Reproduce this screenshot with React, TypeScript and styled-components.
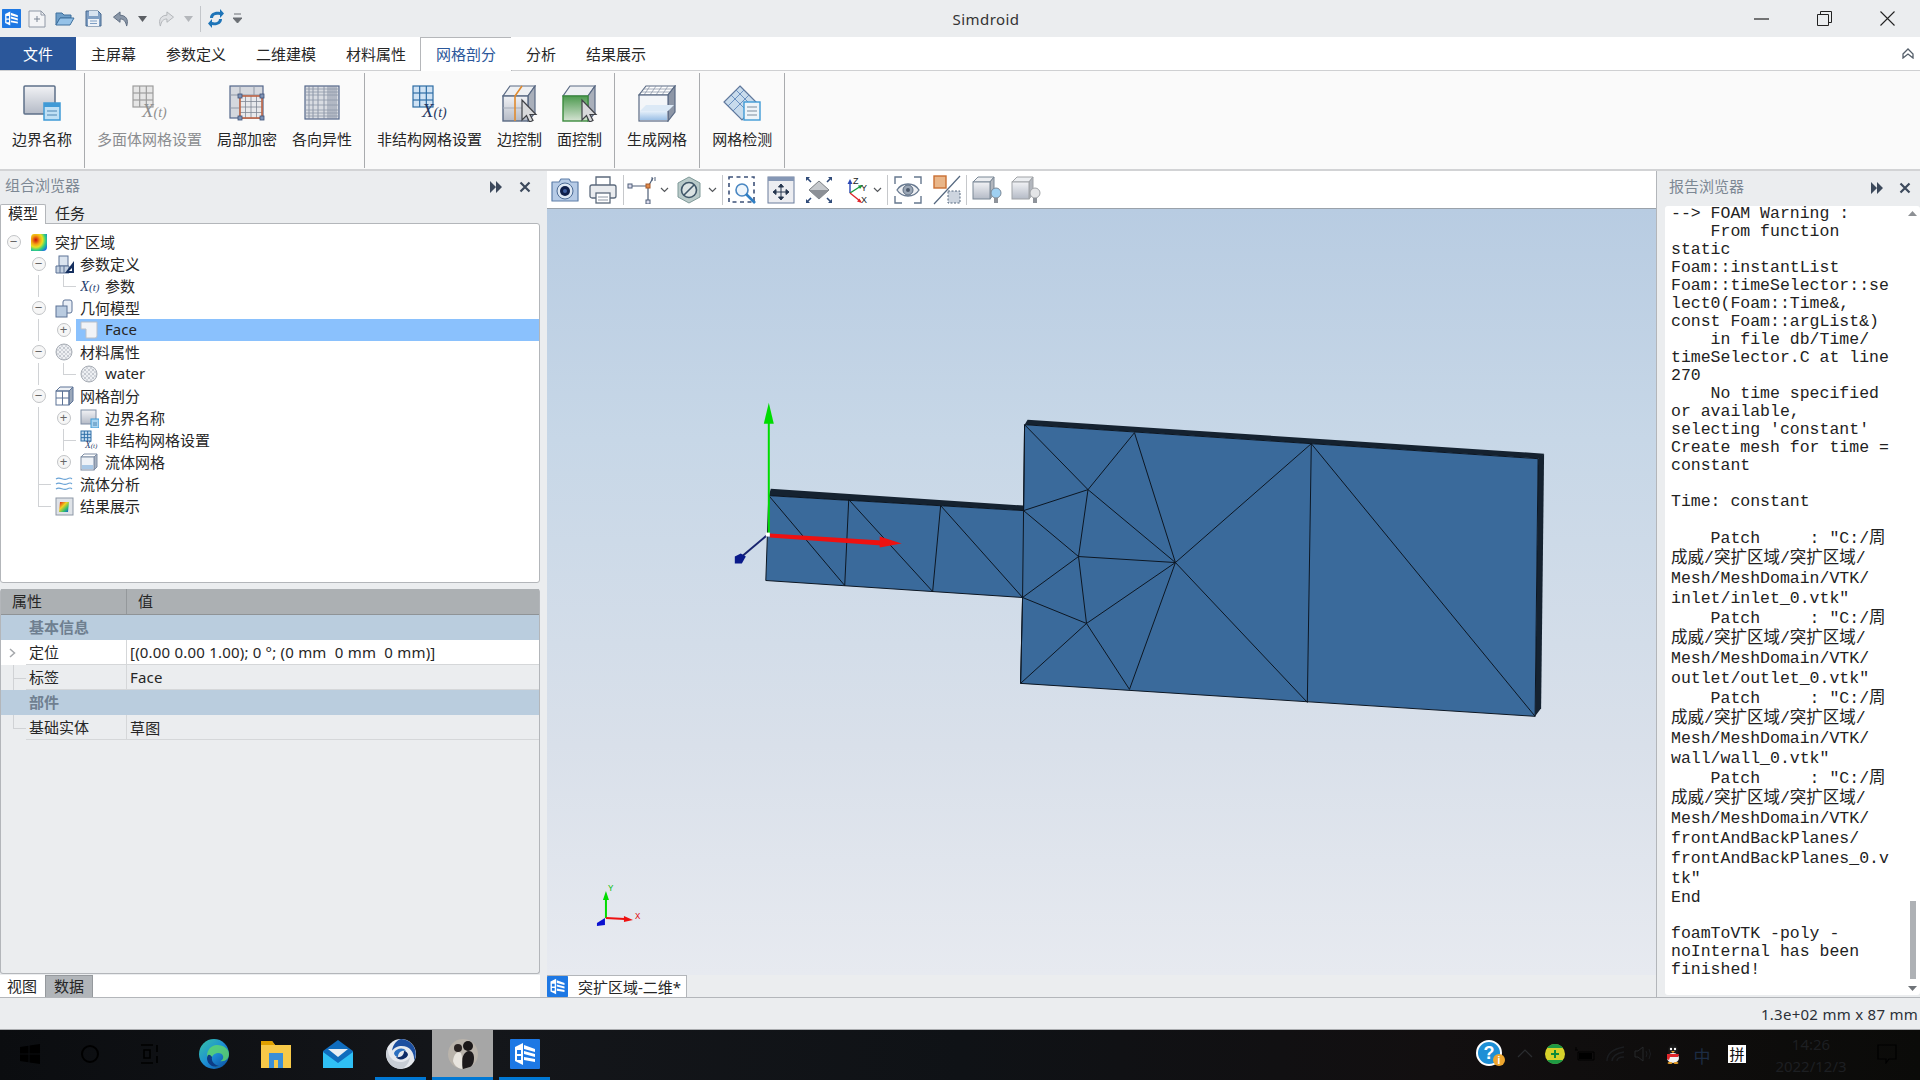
import React from 'react';
import styled, { createGlobalStyle } from 'styled-components';

const Global = createGlobalStyle`
  html, body { margin: 0; padding: 0; background: #ebedef; }
  body { font-family: "Noto Sans", "Noto Sans CJK SC", sans-serif; font-size: 15px; color: #262626; overflow: hidden; }
  * { box-sizing: border-box; }
  svg { display: block; flex: none; }
`;

const Page = styled.div`width: 1920px; height: 1080px; display: flex; flex-direction: column; overflow: hidden;`;

/* ---------- title bar ---------- */
const TitleBar = styled.div`height: 37px; display: flex; align-items: center; background: #ebedef;`;
const QuickBar = styled.div`width: 248px; display: flex; align-items: center; height: 100%;`;
const Slot = styled.div<{ $w: number }>`width: ${p => p.$w}px; height: 100%; display: flex; align-items: center; justify-content: center; flex: none;`;
const QuickSep = styled.div`width: 1px; height: 26px; background: #c3c6ca;`;
const AppTitle = styled.div`flex: 1; text-align: center; padding-right: 6px; font-size: 15px; letter-spacing: 0.45px; color: #333;`;
const WinControls = styled.div`display: flex; height: 100%; width: 190px; flex: none;`;

/* ---------- ribbon tabs ---------- */
const TabRow = styled.div`height: 33px; display: flex; align-items: stretch; background: #fff;`;
const FileTab = styled.div`width: 76px; background: #2b579a; color: #fff; display: flex; align-items: center; justify-content: center;`;
const RibbonTab = styled.div<{ $active?: boolean }>`
  padding: 0 15px ${p => (p.$active ? 2 : 0)}px; display: flex; align-items: center; height: ${p => (p.$active ? 34 : 33)}px;
  background: #fff; position: relative; z-index: 1;
  color: ${p => (p.$active ? '#2b579a' : '#262626')};
  border-style: solid; border-color: ${p => (p.$active ? '#b5b7ba' : 'transparent')};
  border-width: ${p => (p.$active ? '1px 1px 0 1px' : '0')};
  margin: ${p => (p.$active ? '0 -1px' : '0')};
`;
const Collapse = styled.div`margin-left: auto; padding-right: 6px; display: flex; align-items: center;`;

/* ---------- ribbon ---------- */
const Ribbon = styled.div`height: 101px; display: flex; background: #fafafa; border-top: 1px solid #cfd0d2; border-bottom: 2px solid #d2d3d5;`;
const RibbonGroup = styled.div`display: flex; gap: 15px; padding: 10px 12px 0; margin: 2px 0 1px; border-right: 1px solid #a9abae;`;
const RibbonBtn = styled.div<{ $off?: boolean }>`display: flex; flex-direction: column; align-items: center; color: ${p => (p.$off ? '#8b8d90' : '#262626')};`;
const RibbonIcon = styled.div`height: 40px; display: flex; align-items: center; justify-content: center;`;
const RibbonLabel = styled.div`margin-top: 6px; line-height: 20px; white-space: nowrap;`;

/* ---------- main ---------- */
const Main = styled.div`flex: 1; display: flex; min-height: 0;`;
const LeftPanel = styled.div`width: 547px; flex: none; display: flex; flex-direction: column;`;
const PanelHeader = styled.div<{ $h: number }>`height: ${p => p.$h}px; flex: none; display: flex; align-items: center; color: #7d8894; font-size: 15px;`;
const PanelTitle = styled.div`flex: 1; padding-left: 5px; padding-bottom: 7px;`;
const HeaderBtns = styled.div`display: flex; align-items: center; gap: 16px; padding-right: 16px; padding-bottom: 2px;`;

const TreeTabs = styled.div`height: 19px; display: flex; flex: none; position: relative; z-index: 1;`;
const TreeTab = styled.div<{ $active?: boolean }>`
  height: ${p => (p.$active ? 20 : 19)}px; padding: 0 7px; line-height: 17px; background: ${p => (p.$active ? '#fff' : 'transparent')};
  border: 1px solid ${p => (p.$active ? '#b3b6ba' : 'transparent')}; border-bottom: 0; border-radius: 2px 2px 0 0; margin-right: 1px;
`;
const TreeBox = styled.div`height: 360px; flex: none; width: 540px; background: #fff; border: 1px solid #b3b6ba; border-radius: 0 3px 3px 3px; padding-top: 7px;`;
const TreeRow = styled.div`height: 22px; display: flex; align-items: stretch;`;
const Guide = styled.div<{ $kind: string }>`
  width: 25px; flex: none; position: relative;
  &::before { content: ''; position: absolute; left: 12px; top: 0; width: 1px; background: #d0d2d5;
    height: ${p => (p.$kind === 'v' || p.$kind === 'tee' ? '100%' : p.$kind === 'elbow' ? '50%' : '0')}; }
  &::after { content: ''; position: absolute; left: 12px; top: 50%; height: 1px; background: #d0d2d5;
    width: ${p => (p.$kind === 'tee' || p.$kind === 'elbow' ? '13px' : '0')}; }
`;
const Toggle = styled.div`
  width: 25px; flex: none; display: flex; align-items: center; justify-content: center;
`;
const ToggleDot = styled.div`
  width: 14px; height: 14px; border: 1px solid #c2c4c7; border-radius: 50%; background: #f6f6f6; display: flex; align-items: center; justify-content: center;
  color: #666; font: 400 13px/12px "Liberation Sans", sans-serif;
`;
const RowBody = styled.div<{ $selected?: boolean }>`
  flex: 1; display: flex; align-items: center; gap: 7px; padding-left: 4px; background: ${p => (p.$selected ? '#8ac1fd' : 'transparent')};
  white-space: nowrap;
`;
const RowIcon = styled.div`width: 18px; flex: none; display: flex; align-items: center;`;
const RowText = styled.span`margin-bottom: 2px;`;
const Gap = styled.div`height: 6px; flex: none;`;

const PropBox = styled.div`flex: 1; width: 540px; background: #ebedef; border: 1px solid #b3b6ba; border-top: 0; border-radius: 3px; min-height: 0;`;
const PropHead = styled.div`height: 26px; background: #acb0b3; display: grid; grid-template-columns: 125px 1fr; border-bottom: 1px solid #8f9396; align-items: center;`;
const PropHeadCell = styled.div<{ $line?: boolean }>`padding-left: 11px; padding-bottom: 2px; height: 100%; display: flex; align-items: center; ${p => p.$line && 'border-left: 1px solid #94989b;'}`;
const PropSection = styled.div`height: 25px; background: #bacdde; color: #6f7f90; padding: 0 0 2px 28px; display: flex; align-items: center; font-weight: 600;`;
const PropRow = styled.div`height: 25px; display: grid; grid-template-columns: 25px 100px 1fr;`;
const PropGutter = styled.div<{ $kind: string }>`
  position: relative; display: flex; align-items: center; padding-left: 8px; background: ${p => (p.$kind === 'arrow' ? '#fff' : 'transparent')};
  &::before { content: ''; position: absolute; left: 12px; top: 0; width: 1px; height: ${p => (p.$kind === 'tee' ? '100%' : p.$kind === 'elbow' ? '50%' : '0')}; background: #d0d2d5; }
  &::after { content: ''; position: absolute; left: 12px; top: 50%; height: 1px; width: ${p => (p.$kind === 'arrow' ? '0' : '13px')}; background: #d0d2d5; }
`;
const PropName = styled.div<{ $white?: boolean }>`padding: 0 0 2px 3px; display: flex; align-items: center; background: ${p => (p.$white ? '#fff' : 'transparent')}; border-bottom: 1px solid #d5d7d9;`;
const PropValue = styled.div<{ $white?: boolean }>`padding-left: 3px; letter-spacing: 0.2px; display: flex; align-items: center; white-space: pre; border-left: 1px solid #d5d7d9; background: ${p => (p.$white ? '#fff' : 'transparent')}; border-bottom: 1px solid #d5d7d9;`;

const BottomTabs = styled.div`height: 22px; flex: none; width: 540px; margin-top: 1px; background: #fff; display: flex; align-items: flex-end;`;
const BottomTab = styled.div<{ $active?: boolean }>`
  height: ${p => (p.$active ? 22 : 21)}px; line-height: 21px; padding: 0 8px 0 ${p => (p.$active ? 8 : 7)}px;
  background: ${p => (p.$active ? '#b1b5b9' : 'transparent')}; border: ${p => (p.$active ? '1px solid #95999d' : '0')}; border-bottom: 0;
`;

const Center = styled.div`width: 1110px; flex: none; display: flex; flex-direction: column; border-right: 1px solid #b3b6ba;`;
const ViewToolbar = styled.div`height: 37px; flex: none; background: #fff; display: flex; align-items: center;`;
const ToolSep = styled.div`width: 1px; height: 30px; background: #c6c8cb; flex: none;`;
const ToolChev = styled.div<{ $w?: number }>`width: ${p => p.$w ?? 14}px; flex: none; display: flex; align-items: center;`;
const Viewport = styled.div`flex: 1; min-height: 0; border-top: 1px solid #9aa2aa; background: linear-gradient(180deg, #b8cce2 0%, #c7d7e7 30%, #d9e0ea 70%, #e7eaf0 100%);`;
const DocStrip = styled.div`height: 22px; flex: none; display: flex; background: #ebedef;`;
const DocTab = styled.div`width: 140px; display: flex; align-items: center; gap: 10px; background: #fff; border-top: 1px solid #b3b6ba; border-right: 1px solid #b3b6ba; white-space: nowrap;`;

const RightPanel = styled.div`flex: 1; display: flex; flex-direction: column; padding-left: 8px; min-width: 0;`;
const RightHeaderBtns = styled(HeaderBtns)`padding-right: 9px; gap: 15px;`;
const RightTitle = styled(PanelTitle)`padding-left: 4px;`;
const ReportBox = styled.div`flex: 1; margin-bottom: 2px; background: #fff; border-radius: 3px; display: flex; min-height: 0;`;
const ReportText = styled.div`flex: 1; padding-left: 6px; margin-top: -1px; font-family: "Liberation Mono", "Noto Sans CJK SC", monospace; font-size: 16.5px; color: #222; white-space: pre;`;
const ReportLine = styled.div<{ $tall?: boolean }>`height: ${p => (p.$tall ? 20 : 18)}px; line-height: ${p => (p.$tall ? 20 : 18)}px;`;
const ScrollCol = styled.div`width: 15px; flex: none; display: flex; flex-direction: column; align-items: center; padding: 5px 0 4px;`;
const ScrollTrack = styled.div`flex: 1; width: 100%; display: flex; justify-content: center; align-items: flex-end; padding-bottom: 7px;`;
const ScrollThumb = styled.div`width: 6px; height: 78px; background: #aeb1b5;`;

const StatusBar = styled.div`height: 33px; flex: none; display: flex; align-items: center; justify-content: flex-end; padding-right: 2px; letter-spacing: 0.27px; background: #ebedef; border-top: 1px solid #b3b6ba; border-bottom: 1px solid #a9abae; color: #2b3038;`;

const TaskBar = styled.div`height: 50px; flex: none; display: flex; align-items: stretch; background: linear-gradient(90deg, #0b0d10 0%, #14161a 25%, #0f1216 50%, #120f10 75%, #0b0b09 100%);`;
const TaskSlot = styled.div<{ $w: number; $on?: boolean; $tile?: boolean }>`
  width: ${p => p.$w}px; flex: none; display: flex; align-items: center; justify-content: center;
  background: ${p => (p.$tile ? '#a6a6a6' : 'transparent')};
  border-bottom: 3px solid ${p => (p.$on ? '#0078d4' : 'transparent')}; border-top: 0;
`;
const TaskGap = styled.div<{ $w: number }>`width: ${p => p.$w}px; flex: none;`;
const Tray = styled.div`margin-left: auto; display: flex; align-items: center; height: 100%;`;
const TrayText = styled.div`width: 24px; text-align: center; color: #1c2c44; font-size: 17px;`;
const ImeBox = styled.div`width: 18px; height: 18px; background: #fff; color: #111; font-size: 15px; line-height: 18px; text-align: center;`;
const Clock = styled.div`width: 110px; text-align: center; color: #1d1f22; font-size: 15px; line-height: 22px;`;

/* ---------- icons ---------- */
const Defs = () => (
  <svg width="0" height="0">
    <defs>
      <linearGradient id="gy" x1="0" y1="0" x2="0" y2="1"><stop offset="0" stopColor="#f1f2f5" /><stop offset="1" stopColor="#b4bac6" /></linearGradient>
      <linearGradient id="gg" x1="0" y1="0" x2="0" y2="1"><stop offset="0" stopColor="#4d9a4f" /><stop offset="1" stopColor="#d5e3d3" /></linearGradient>
      <linearGradient id="gb" x1="0" y1="0" x2="0" y2="1"><stop offset="0" stopColor="#e6f0fa" /><stop offset="1" stopColor="#9cc0e6" /></linearGradient>
      <linearGradient id="ge" x1="0" y1="0" x2="1" y2="1"><stop offset="0" stopColor="#37c6a0" /><stop offset="0.5" stopColor="#1d8fd6" /><stop offset="1" stopColor="#0b4a9e" /></linearGradient>
      <linearGradient id="grb" x1="0" y1="0" x2="1" y2="1"><stop offset="0" stopColor="#e01010" /><stop offset="0.4" stopColor="#f0d020" /><stop offset="0.7" stopColor="#30c070" /><stop offset="1" stopColor="#1050e0" /></linearGradient>
      <radialGradient id="grr" cx="0.3" cy="0.35" r="0.85"><stop offset="0" stopColor="#c80e0e" /><stop offset="0.3" stopColor="#f4a012" /><stop offset="0.5" stopColor="#e8e020" /><stop offset="0.72" stopColor="#30d080" /><stop offset="1" stopColor="#1468e8" /></radialGradient>
    </defs>
  </svg>
);

const Ic = ({ w, h, children }: { w: number; h: number; children: React.ReactNode }) => (
  <svg width={w} height={h} viewBox={`0 0 ${w} ${h}`}>{children}</svg>
);

const Grid = ({ x, y, w, h, nx, ny, c, sw = 1 }: { x: number; y: number; w: number; h: number; nx: number; ny: number; c: string; sw?: number }) => (
  <g stroke={c} strokeWidth={sw} fill="none">
    <rect x={x} y={y} width={w} height={h} />
    {Array.from({ length: nx - 1 }, (_, i) => <line key={'x' + i} x1={x + (w * (i + 1)) / nx} x2={x + (w * (i + 1)) / nx} y1={y} y2={y + h} />)}
    {Array.from({ length: ny - 1 }, (_, i) => <line key={'y' + i} y1={y + (h * (i + 1)) / ny} y2={y + (h * (i + 1)) / ny} x1={x} x2={x + w} />)}
  </g>
);

const Pointer = ({ x, y, s = 1 }: { x: number; y: number; s?: number }) => (
  <path transform={`translate(${x} ${y}) scale(${s})`} d="M0 0V20L4.5 15.500 7.500 22 11 20.500 8 14.500H14Z" fill="#d8d9db" stroke="#3f4146" strokeWidth="1.2" />
);

const Xt = ({ x, y, c, s = 15 }: { x: number; y: number; c: string; s?: number }) => (
  <text x={x} y={y} fill={c} fontFamily='"Liberation Serif", serif' fontStyle="italic" fontSize={s}>
    <tspan fontSize={s * 1.35}>X</tspan>(t)
  </text>
);

const BoundaryIcon = () => (
  <Ic w={38} h={36}>
    <rect x="1" y="1" width="31" height="28" rx="1" fill="url(#gy)" stroke="#5d7089" strokeWidth="1.5" />
    <rect x="21" y="18" width="16" height="17" fill="#bfe0f5" stroke="#3f9ad6" strokeWidth="1.5" />
    <rect x="21" y="18" width="16" height="4" fill="#3f9ad6" />
    <path d="M24 26H34M24 30H34" stroke="#4f86b2" />
  </Ic>
);
const XtMeshIcon = ({ c, line, text }: { c: string; line: string; text: string }) => (
  <Ic w={36} h={36}>
    <rect x="1" y="1" width="20" height="21" fill={c} />
    <Grid x={1} y={1} w={20} h={21} nx={3} ny={3} c={line} sw={1.2} />
    <Xt x={10} y={32} c={text} s={14} />
  </Ic>
);
const RefineIcon = () => (
  <Ic w={36} h={36}>
    <rect x="1" y="1" width="33" height="32" fill="#d5d8de" stroke="#54678a" strokeWidth="1.2" />
    <path d="M1 10H34M1 23H10M11 1V33M25 1V10" stroke="#8f98a6" />
    <rect x="11" y="11" width="22" height="22" fill="#e8e9ec" />
    <Grid x={11} y={11} w={22} h={22} nx={4} ny={4} c="#7f8794" sw={0.8} />
    <rect x="11" y="11" width="22" height="22" fill="none" stroke="#c9603a" strokeWidth="1.4" />
    {[[11, 11], [33, 11], [11, 33], [33, 33]].map(([x, y]) => <rect key={`${x}${y}`} x={x - 2} y={y - 2} width="4" height="4" fill="#7f93b5" stroke="#3d5078" strokeWidth="0.8" />)}
  </Ic>
);
const AnisoIcon = () => (
  <Ic w={36} h={36}>
    <rect x="1" y="1" width="34" height="33" fill="#d9dce2" stroke="#54678a" strokeWidth="1.2" />
    <path d="M5 1V34M9 1V34M14 1V34M20 1V34M24 1V34M26 1V34M28 1V34M30 1V34M32 1V34" stroke="#78849a" strokeWidth="0.8" />
    <path d="M1 4H35M1 7H35M1 10H35M1 15H35M1 20H35M1 25H35M1 28H35M1 31H35" stroke="#8d97a8" strokeWidth="0.8" />
  </Ic>
);
const Cube = ({ front, stripe }: { front: string; stripe?: boolean }) => (
  <g>
    <path d="M10 1H35L28 11H3Z" fill="#eef0f3" stroke="#5a6a84" strokeWidth="1.2" />
    <path d="M35 1V28L28 36V11Z" fill="#a9afba" stroke="#5a6a84" strokeWidth="1.2" />
    <rect x="3" y="11" width="25" height="25" fill={front} stroke={front === 'url(#gg)' ? '#3b8a3d' : '#5a6a84'} strokeWidth="1.4" />
    {stripe && <path d="M3 23H28" stroke="#a5acb8" />}
    {stripe && <path d="M22 1 15 11V36" stroke="#e08a2e" strokeWidth="1.6" fill="none" />}
  </g>
);
const EdgeCtrlIcon = () => <Ic w={40} h={37}><Cube front="url(#gy)" stripe /><Pointer x={22} y={15} /></Ic>;
const FaceCtrlIcon = () => <Ic w={40} h={37}><Cube front="url(#gg)" /><Pointer x={22} y={15} /></Ic>;
const GenMeshIcon = () => (
  <Ic w={38} h={37}>
    <path d="M8 1H37L30 10H1Z" fill="#fff" stroke="#5a6a84" strokeWidth="1.2" />
    <path d="M12 1 6 10M18 1 12 10M24 1 18 10M30 1 24 10M5 4H34M3 7H32" stroke="#8d97a8" strokeWidth="0.8" />
    <path d="M37 1V27L30 36V10Z" fill="#8d96a6" stroke="#5a6a84" strokeWidth="1.2" />
    <rect x="1" y="10" width="29" height="26" fill="#f4f6f9" stroke="#5a6a84" strokeWidth="1.2" />
    <path d="M2 26H29V35H2Z" fill="url(#gb)" />
    <path d="M2 26 8 20H36L30 26Z" fill="#dce9f6" />
  </Ic>
);
const CheckMeshIcon = () => (
  <Ic w={38} h={36}>
    <path d="M17 1 35 19 19 35 1 17Z" fill="#c8dbec" stroke="#60789c" strokeWidth="1.2" />
    <path d="M8 10 26 28M13 5 31 23M26 10 10 26M21 5 5 21" stroke="#6b91c0" strokeWidth="1" />
    <rect x="21" y="17" width="16" height="18" fill="#eef4f9" stroke="#3f9ad6" strokeWidth="1.4" />
    <path d="M24 22H34M24 26H34M24 30H34" stroke="#7b8b9c" />
  </Ic>
);

const Camera = () => (
  <Ic w={28} h={24}>
    <path d="M1 4H8L10 1H18L20 4H27V23H1Z" fill="#b6cbe6" stroke="#5e7fa8" strokeWidth="1.2" strokeLinejoin="round" />
    <circle cx="14" cy="13" r="8" fill="#dde7f3" stroke="#4b6a94" />
    <circle cx="14" cy="13" r="5" fill="#0f1f4a" />
    <circle cx="14" cy="13" r="2" fill="#3f5fa0" />
  </Ic>
);
const Printer = () => (
  <Ic w={28} h={28}>
    <path d="M7 10V1H21V10" fill="#fff" stroke="#5c6a7c" strokeWidth="1.3" />
    <rect x="1" y="9" width="26" height="13" rx="2" fill="#e9ebee" stroke="#5c6a7c" strokeWidth="1.3" />
    <rect x="7" y="17" width="14" height="10" fill="#fff" stroke="#5c6a7c" strokeWidth="1.3" />
    <path d="M9 21H19M9 24H19" stroke="#8d96a3" />
  </Ic>
);
const NodeTool = () => (
  <Ic w={30} h={28}>
    <path d="M3 10H21M21 10V26M22 9 26 2" stroke="#4e5f78" strokeWidth="1.2" fill="none" />
    <rect x="1" y="8" width="4" height="4" fill="#dde" stroke="#4e5f78" />
    <rect x="19" y="8" width="4" height="4" fill="#e08a4a" stroke="#a65a2a" />
    <rect x="19" y="24" width="4" height="4" fill="#dde" stroke="#4e5f78" />
    <path d="M25 1V5M28 1V5" stroke="#4e5f78" />
  </Ic>
);
const Hexagon = () => (
  <Ic w={24} h={28}>
    <path d="M12 1 23 7V21L12 27 1 21V7Z" fill="#b9cac9" stroke="#7f9998" />
    <circle cx="12" cy="14" r="7.500" fill="#dbe3e3" stroke="#3f5668" strokeWidth="1.6" />
    <path d="M7 19 17 9" stroke="#3f5668" strokeWidth="1.6" />
  </Ic>
);
const ZoomBox = () => (
  <Ic w={28} h={28}>
    <rect x="1" y="1" width="25" height="25" fill="none" stroke="#3d5178" strokeWidth="1.6" strokeDasharray="4 3.500" />
    <circle cx="14" cy="14" r="6" fill="#eef5fb" stroke="#4a87c2" strokeWidth="1.6" />
    <path d="M18 18 27 27" stroke="#2f7fc4" strokeWidth="2.6" />
  </Ic>
);
const FitAll = () => (
  <Ic w={28} h={28}>
    <rect x="1" y="1" width="26" height="26" fill="#ecedf1" stroke="#6a7d9c" />
    <rect x="1" y="1" width="26" height="4" fill="#8597b5" />
    <path d="M14 9V23M7 16H21M14 8l-2.500 3h5ZM14 24l-2.500-3h5ZM6 16l3-2.500v5ZM22 16l-3-2.500v5Z" stroke="#26364f" fill="#26364f" strokeWidth="1" />
  </Ic>
);
const DiamondFit = () => (
  <Ic w={28} h={28}>
    <path d="M14 5 24 14 14 23 4 14Z" fill="#c6c9cd" stroke="#7b7f84" />
    <path d="M4 14H24L14 23Z" fill="#8c9096" />
    <path d="M2 2 6 6M26 2 22 6M2 26 6 22M26 26 22 22" stroke="#2f4a78" strokeWidth="1.6" />
    <path d="M1 1h4l-4 4ZM27 1h-4l4 4ZM1 27h4l-4-4ZM27 27h-4l4-4Z" fill="#2f4a78" />
  </Ic>
);
const AxesTool = () => (
  <Ic w={26} h={28}>
    <path d="M7 17V6" stroke="#2a47b5" strokeWidth="1.4" />
    <path d="M7 3 4.500 8h5Z" fill="#2a47b5" />
    <path d="M7 17 18 10" stroke="#179a3c" strokeWidth="1.4" />
    <path d="M20 9l-5 .5 2 3.500Z" fill="#179a3c" />
    <path d="M7 17 17 25" stroke="#e0242a" strokeWidth="1.4" />
    <path d="M19 27l-5-1.500 2.500-3Z" fill="#e0242a" />
    <text x="10" y="8" fontSize="9" fill="#222" fontFamily='"Liberation Sans", sans-serif'>Z</text>
    <text x="18" y="15" fontSize="9" fill="#222" fontFamily='"Liberation Sans", sans-serif'>Y</text>
    <text x="18" y="27" fontSize="9" fill="#222" fontFamily='"Liberation Sans", sans-serif'>X</text>
  </Ic>
);
const Eye = () => (
  <Ic w={28} h={28}>
    <path d="M1 8V1H8M20 1H27V8M1 20V27H8M20 27H27V20" fill="none" stroke="#66788f" strokeWidth="1.4" />
    <path d="M3 14C8 6 20 6 25 14 20 22 8 22 3 14Z" fill="#eef0f3" stroke="#66788f" strokeWidth="1.3" />
    <circle cx="14" cy="14" r="5" fill="#9aa6b5" stroke="#5b6b80" />
    <circle cx="14" cy="14" r="2" fill="#4d5a6c" />
  </Ic>
);
const Ortho = () => (
  <Ic w={28} h={30}>
    <rect x="1" y="1" width="12" height="12" fill="#e9b689" stroke="#c96f33" strokeWidth="1.4" />
    <path d="M1 29 27 1" stroke="#54677f" strokeWidth="1.2" />
    <rect x="15" y="16" width="12" height="12" fill="#cdd5df" stroke="#56687f" strokeDasharray="2 1.500" />
  </Ic>
);
const CubeBulb = ({ bulb, edge }: { bulb: string; edge: string }) => (
  <Ic w={30} h={28}>
    <path d="M6 1H22L18 6H1Z" fill="#eceef1" stroke={edge} />
    <path d="M22 1V18L18 23V6Z" fill="#b2b6bd" stroke={edge} />
    <rect x="1" y="6" width="17" height="17" fill="url(#gy)" stroke={edge} />
    <circle cx="24" cy="17" r="5" fill={bulb} stroke={edge} />
    <rect x="22" y="22" width="4" height="5" fill="#8e939a" />
  </Ic>
);

const Chev = ({ c = '#55585c' }: { c?: string }) => (
  <Ic w={9} h={6}><path d="M1 1l3.500 3.500L8 1" fill="none" stroke={c} strokeWidth="1.2" /></Ic>
);
const SkipBtn = () => (
  <Ic w={14} h={12}><path d="M1 0 7 6 1 12ZM7 0 13 6 7 12Z" fill="#3d4a5c" /></Ic>
);
const CloseBtn = () => (
  <Ic w={12} h={12}><path d="M1.500 1.500 10.500 10.500M10.500 1.500 1.500 10.500" stroke="#3d4a5c" strokeWidth="2.200" /></Ic>
);

const AppLogo = ({ s }: { s: number }) => (
  <svg width={s} height={s} viewBox="0 0 30 30">
    <rect width="30" height="30" fill="#1d78e4" rx="1" />
    <path d="M5 8 13 4V26L5 22Z" fill="#fff" />
    <path d="M14 6 25 10V13L14 10ZM14 12 25 15V18L14 15ZM14 18 25 20V23L14 21Z" fill="#fff" />
    <path d="M7 11H11V15H7ZM7 17H11V21H7Z" fill="#1d78e4" />
  </svg>
);
const NewDoc = () => (
  <Ic w={18} h={18}>
    <path d="M1 1H13L17 5V17H1Z" fill="#f3f4f6" stroke="#8f98a6" />
    <path d="M13 1V5H17" fill="none" stroke="#8f98a6" />
    <path d="M9 6V12M6 9H12" stroke="#7a8594" />
  </Ic>
);
const Folder = () => (
  <Ic w={20} h={14}>
    <path d="M1 1H7L9 3H16V6H5L1 13Z" fill="#6f9fc9" stroke="#3f719e" />
    <path d="M1 13 5 6H19L15 13Z" fill="#95c2e8" stroke="#3f719e" />
  </Ic>
);
const Save = () => (
  <Ic w={17} h={17}>
    <path d="M1 1H13L16 4V16H1Z" fill="#7f9fc4" stroke="#47688f" />
    <rect x="4" y="1" width="9" height="5" fill="#d7e3f0" />
    <rect x="3" y="9" width="11" height="7" fill="#eef2f7" />
    <path d="M5 11H12M5 13.500H12" stroke="#7f9fc4" />
  </Ic>
);
const Undo = ({ flip, c }: { flip?: boolean; c: string }) => (
  <svg width="18" height="16" viewBox="0 0 18 17" style={{ transform: flip ? 'scaleX(-1)' : undefined }}>
    <path d="M8 1 1 6.500 8 12V8.500C12 8.500 14 11 15 16 17.500 9 14 4.500 8 4.500Z" fill={c} stroke={flip ? '#b0b3b8' : '#5b6a7e'} />
  </svg>
);
const Tri = ({ c }: { c: string }) => (
  <Ic w={9} h={6}><path d="M0 0H9L4.500 6Z" fill={c} /></Ic>
);
const Refresh = () => (
  <Ic w={16} h={19}>
    <path d="M2 9C2 4 7 2 12 3V0L16 4.500 12 9V6C8 5 5 6 5 9Z" fill="#1e74b8" />
    <path d="M14 10C14 15 9 17 4 16V19L0 14.500 4 10V13C8 14 11 13 11 10Z" fill="#1e74b8" />
  </Ic>
);
const Customize = () => (
  <Ic w={9} h={11}><path d="M1 1H8M0 5H9L4.500 10Z" stroke="#6b6f74" fill="#6b6f74" /></Ic>
);

const TreeRoot = () => (
  <svg width="18" height="19" viewBox="0 0 18 19"><path d="M4 1H17V14Q17 18 13 18H1V5Q1 1 4 1Z" fill="url(#grr)" /></svg>
);
const TreeParam = () => (
  <Ic w={20} h={19}>
    <rect x="4" y="1" width="9" height="10" fill="#dbe4ef" stroke="#5d7396" />
    <path d="M1 11H14V18H1ZM5 11V18M9 11V18" fill="#c3d0e0" stroke="#5d7396" />
    <path d="M19 6V18H10Z" fill="#16305f" />
    <path d="M17 13V16H14Z" fill="#fff" />
  </Ic>
);
const TreeXt = () => (
  <Ic w={20} h={18}><Xt x={0} y={14} c="#27406e" s={11} /></Ic>
);
const TreeGeo = () => (
  <Ic w={18} h={20}>
    <rect x="8" y="2" width="9" height="13" rx="2" fill="#e8eef6" stroke="#5d7396" />
    <rect x="1" y="8" width="11" height="11" fill="#b9cbe0" stroke="#5d7396" />
  </Ic>
);
const TreeFace = () => (
  <Ic w={18} h={18}>
    <path d="M1 1H17V15Q17 17 15 17H6V8H1Z" fill="#f1f3f7" stroke="#b9bfc9" />
  </Ic>
);
const TreeMat = () => (
  <svg width="18" height="18" viewBox="0 0 18 18">
    <defs><pattern id="dots" width="4" height="4" patternUnits="userSpaceOnUse"><rect width="4" height="4" fill="#eef0f3" /><circle cx="1" cy="1" r="1" fill="#b9bec6" /><circle cx="3" cy="3" r="1" fill="#c9cdd3" /></pattern></defs>
    <circle cx="9" cy="9" r="8" fill="url(#dots)" stroke="#a8adb5" />
  </svg>
);
const TreeMesh = () => (
  <Ic w={19} h={20}>
    <path d="M5 1H18L14 5H1Z" fill="#eef1f5" stroke="#5d7396" />
    <path d="M18 1V15L14 19V5Z" fill="#9aa7ba" stroke="#5d7396" />
    <Grid x={1} y={5} w={13} h={14} nx={2} ny={2} c="#5d7396" />
  </Ic>
);
const TreeBoundary = () => (
  <Ic w={19} h={19}>
    <rect x="1" y="1" width="15" height="14" fill="url(#gy)" stroke="#7e8da4" />
    <rect x="11" y="10" width="8" height="9" fill="#a9d3ef" stroke="#3f9ad6" />
    <path d="M13 14H17M13 16H17" stroke="#4f86b2" />
  </Ic>
);
const TreeUnstruct = () => (
  <Ic w={18} h={20}>
    <rect x="1" y="1" width="10" height="10" fill="#c8def2" />
    <Grid x={1} y={1} w={10} h={10} nx={3} ny={3} c="#2f6fa8" />
    <Xt x={5} y={18} c="#27406e" s={7} />
  </Ic>
);
const TreeFluid = () => (
  <Ic w={18} h={18}>
    <path d="M4 1H17L14 4H1Z" fill="#fff" stroke="#7e8da4" />
    <path d="M17 1V14L14 17V4Z" fill="#a7b1c0" stroke="#7e8da4" />
    <rect x="1" y="4" width="13" height="13" fill="#eef2f7" stroke="#7e8da4" />
    <rect x="2" y="12" width="11" height="4" fill="#a9c8e6" />
  </Ic>
);
const TreeFlow = () => (
  <Ic w={18} h={16}>
    <path d="M1 3C5 0 8 5 12 3S16 2 17 3M1 8C5 5 8 10 12 8S16 7 17 8M1 13C5 10 8 15 12 13S16 12 17 13" fill="none" stroke="#6aa3d6" strokeWidth="1.1" />
  </Ic>
);
const TreeResult = () => (
  <Ic w={19} h={19}>
    <rect x="1" y="1" width="17" height="17" fill="#dfe3e8" stroke="#8d97a6" />
    <path d="M5 5H14L13 15H4Z" fill="url(#grb)" />
  </Ic>
);

/* ---------- taskbar icons ---------- */
const WinLogo = () => <Ic w={20} h={20}><path d="M0 3 8.500 1.700V9.500H0ZM9.500 1.500 20 0V9.500H9.500ZM0 10.500H8.500V18.300L0 17ZM9.500 10.500H20V20L9.500 18.500Z" fill="#000" /></Ic>;
const CircleBtn = () => <Ic w={20} h={20}><circle cx="10" cy="10" r="8" fill="none" stroke="#000" strokeWidth="2" /></Ic>;
const TaskView = () => <Ic w={20} h={20}><path d="M1 1H13M1 19H13M4 6H10V14H4ZM17 1V8M17 12V19" fill="none" stroke="#000" strokeWidth="1.6" /></Ic>;
const EdgeLogo = () => (
  <Ic w={30} h={30}>
    <circle cx="15" cy="15" r="15" fill="url(#ge)" />
    <path d="M30 15C30 10 25 6 18 6 12 6 8 11 8 17 8 24 14 28 20 28 14 26 12 22 13 18 15 13 23 13 24 17 25 20 22 22 21 22 26 23 30 20 30 15Z" fill="#5fd86a" opacity="0.8" />
    <path d="M13 18C12 23 16 26 20 27 16 29 9 27 8 20 8 16 10 14 13 18Z" fill="#0d3c85" />
  </Ic>
);
const ExplorerLogo = () => (
  <Ic w={30} h={30}>
    <path d="M0 2H11L14 6H30V29H0Z" fill="#f7c948" />
    <path d="M0 2H11L14 6H0Z" fill="#e0a100" />
    <path d="M8 14H22V29H17V21H13V29H8Z" fill="#3a8fd8" />
  </Ic>
);
const MailLogo = () => (
  <Ic w={30} h={28}>
    <path d="M15 0 30 11V28H0V11Z" fill="#0f6cbd" />
    <path d="M0 12 15 23 30 12V28H0Z" fill="#2fc0f5" />
    <path d="M5 9H25L15 17Z" fill="#e8eef4" />
  </Ic>
);
const SLogo = () => (
  <Ic w={30} h={30}>
    <circle cx="15" cy="15" r="15" fill="#e6e9ee" />
    <path d="M15 0A15 15 0 0 1 28 22C29 14 24 6 14 7 8 8 6 12 6 12 7 5 11 1 15 0Z" fill="#1c4fa0" />
    <path d="M15 30A15 15 0 0 1 2 8C1 16 6 24 16 23 22 22 24 18 24 18 23 25 19 29 15 30Z" fill="#c8ced6" />
    <path d="M8 14C10 9 18 8 20 12 15 11 12 14 12 18 10 18 8 16 8 14Z" fill="#2b6fc0" />
    <path d="M22 16C20 21 12 22 10 18 15 19 18 16 18 12 20 12 22 14 22 16Z" fill="#0c2a66" />
  </Ic>
);
const Avatar = () => (
  <Ic w={30} h={30}>
    <circle cx="15" cy="15" r="15" fill="#b9b3ab" />
    <path d="M15 30C12 20 16 12 21 12 28 12 27 26 22 28Z" fill="#1d1a1c" />
    <circle cx="20" cy="7" r="5" fill="#1a1718" />
    <path d="M5 22C6 14 10 12 13 14 15 20 14 26 14 30 9 29 6 26 5 22Z" fill="#e8e4de" />
    <circle cx="10" cy="9" r="4" fill="#2a2423" />
  </Ic>
);
const HelpBadge = () => (
  <svg width="30" height="28" viewBox="0 0 30 28">
    <circle cx="13" cy="13" r="12" fill="#1d8fd6" stroke="#fff" strokeWidth="2" />
    <text x="13" y="19" textAnchor="middle" fill="#fff" fontSize="18" fontWeight="700" fontFamily='"Liberation Sans", sans-serif'>?</text>
    <circle cx="23" cy="20" r="6" fill="#eda52d" />
    <text x="23" y="24" textAnchor="middle" fill="#fff" fontSize="10" fontWeight="700" fontFamily='"Liberation Sans", sans-serif'>i</text>
  </svg>
);
const GreenPlus = () => (
  <Ic w={20} h={20}>
    <circle cx="10" cy="10" r="10" fill="#d7d12b" />
    <path d="M2 4A10 10 0 0 1 18 4ZM2 16A10 10 0 0 0 18 16Z" fill="#1e9a44" />
    <path d="M10 6V14M6 10H14" stroke="#0e8a3a" strokeWidth="2" />
  </Ic>
);
const Battery = () => <Ic w={20} h={14}><path d="M0 3H3M1 0V3M3 5H19V13H3Z" fill="none" stroke="#000" /><rect x="4" y="6" width="13" height="6" fill="#000" /></Ic>;
const Wifi = () => <Ic w={20} h={16}><path d="M2 15C2 8 8 3 19 1M7 15C7 11 11 7 19 6M12 15C12 13 14 11 19 11" fill="none" stroke="#1b1d20" strokeWidth="1.4" /></Ic>;
const Volume = () => <Ic w={18} h={16}><path d="M1 5H4L9 1V15L4 11H1Z" fill="none" stroke="#26282b" /><path d="M12 5Q14 8 12 11M15 3Q18 8 15 13" fill="none" stroke="#1b1d20" /></Ic>;
const QQ = () => (
  <Ic w={16} h={20}>
    <ellipse cx="8" cy="7" rx="5" ry="7" fill="#181818" />
    <ellipse cx="8" cy="14" rx="6" ry="5" fill="#f3f3f3" />
    <path d="M2 10H14L13 13H5L4 16 2 15Z" fill="#e0262b" />
    <circle cx="6" cy="5" r="1.200" fill="#fff" /><circle cx="10" cy="5" r="1.200" fill="#fff" />
    <path d="M6 7H10L8 9Z" fill="#f0a52a" />
    <ellipse cx="5" cy="19" rx="2.500" ry="1" fill="#f0a52a" /><ellipse cx="11" cy="19" rx="2.500" ry="1" fill="#f0a52a" />
  </Ic>
);
const Bubble = () => <Ic w={20} h={20}><path d="M1 1H19V15H12L9 19V15H1Z" fill="none" stroke="#000" strokeWidth="1.2" /></Ic>;

/* ---------- viewport scene ---------- */
const Scene = () => {
  const A = '1025,424'; const BR = '1536,716'; const BL = '1021,683';
  const edges: string[] = [
    `${A} 1088.5,489`, '1135,432 1088.5,489', '1135,432 1176,562', '1312,443 1176,562', '1312,443 1308,702',
    `1312,443 ${BR}`, '1088.5,489 1024,510', '1088.5,489 1079,556', '1088.5,489 1176,562', '1024,510 1079,556',
    '1079,556 1176,562', '1079,556 1023,597', '1079,556 1087,623', '1023,597 1087,623', '1087,623 1176,562',
    `1087,623 ${BL}`, '1087,623 1130,689', '1176,562 1130,689', '1176,562 1308,702', '1025,424 1024,510', '1023,597 1021,683', '1024,510 1023,597',
    '769,495 845,585', '849,499 845,585', '849,499 933,591', '941,505 933,591', '941,505 1023,597',
  ];
  return (
    <svg width="100%" height="100%" viewBox="547 208 1110 767" preserveAspectRatio="none">
      <polygon points="771,488 1024,505 1024,510 769,495" fill="#152230" />
      <polygon points="1025,424 1028,419 1545,453 1541,458" fill="#152230" />
      <polygon points="1539,458 1545,453 1542,708 1536,716" fill="#152230" />
      <polygon points="769,495 1024,510 1025,424 1539,458 1536,716 1021,683 1023,597 766,580" fill="#3a6a9b" stroke="#0c1622" strokeWidth="1" />
      {edges.map(e => {
        const [a, b] = e.split(' ');
        const [x1, y1] = a.split(','); const [x2, y2] = b.split(',');
        return <line key={e} x1={x1} y1={y1} x2={x2} y2={y2} stroke="#0c1622" strokeWidth="1" />;
      })}
      <line x1="769" y1="534" x2="769" y2="420" stroke="#00dc00" strokeWidth="2" />
      <polygon points="769,402 774,423 764,423" fill="#00dc00" />
      <line x1="768" y1="534" x2="742" y2="556" stroke="#18246e" strokeWidth="2" />
      <polygon points="735,563 735,556 741,553 746,556 742,563" fill="#0a1a8a" />
      <polygon points="770,533 882,540 882,545 770,537" fill="#ee1111" />
      <polygon points="902,543 880,536 880,547" fill="#ee1111" />
      <rect x="766" y="532" width="4" height="4" fill="#fff" />
      <line x1="606" y1="918" x2="606" y2="898" stroke="#00dc00" strokeWidth="2" />
      <polygon points="606,891 609,900 603,900" fill="#00dc00" />
      <line x1="606" y1="918" x2="625" y2="919" stroke="#ee1111" strokeWidth="2" />
      <polygon points="633,920 624,916 624,922" fill="#ee1111" />
      <polygon points="605,918 597,923 597,926 605,925" fill="#0a10d0" />
      <text x="608" y="891" fill="#10c010" fontSize="9" fontFamily='"Liberation Mono", monospace'>Y</text>
      <text x="635" y="919" fill="#e01010" fontSize="9" fontFamily='"Liberation Mono", monospace'>X</text>
    </svg>
  );
};

/* ---------- data ---------- */
type RowDef = { g: string[]; icon: React.ReactNode; text: string; sel?: boolean };
const treeRows: RowDef[] = [
  { g: ['minus'], icon: <TreeRoot />, text: '突扩区域' },
  { g: ['', 'minus'], icon: <TreeParam />, text: '参数定义' },
  { g: ['', 'v', 'elbow'], icon: <TreeXt />, text: '参数' },
  { g: ['', 'minus'], icon: <TreeGeo />, text: '几何模型' },
  { g: ['', 'v', 'plus'], icon: <TreeFace />, text: 'Face', sel: true },
  { g: ['', 'minus'], icon: <TreeMat />, text: '材料属性' },
  { g: ['', 'v', 'elbow'], icon: <TreeMat />, text: 'water' },
  { g: ['', 'minus'], icon: <TreeMesh />, text: '网格剖分' },
  { g: ['', 'v', 'plus'], icon: <TreeBoundary />, text: '边界名称' },
  { g: ['', 'v', 'tee'], icon: <TreeUnstruct />, text: '非结构网格设置' },
  { g: ['', 'v', 'plus'], icon: <TreeFluid />, text: '流体网格' },
  { g: ['', 'tee'], icon: <TreeFlow />, text: '流体分析' },
  { g: ['', 'elbow'], icon: <TreeResult />, text: '结果展示' },
];

const patch = (tail: string[]) => ['    Patch     : "C:/周', '成威/突扩区域/突扩区域/', 'Mesh/MeshDomain/VTK/', ...tail];
const report = [
  '--> FOAM Warning :', '    From function', 'static', 'Foam::instantList', 'Foam::timeSelector::se', 'lect0(Foam::Time&,',
  'const Foam::argList&)', '    in file db/Time/', 'timeSelector.C at line', '270', '    No time specified', 'or available,',
  "selecting 'constant'", 'Create mesh for time =', 'constant', ' ', 'Time: constant', ' ',
  ...patch(['inlet/inlet_0.vtk"']), ...patch(['outlet/outlet_0.vtk"']), ...patch(['wall/wall_0.vtk"']),
  ...patch(['frontAndBackPlanes/', 'frontAndBackPlanes_0.v', 'tk"']),
  'End', ' ', 'foamToVTK -poly -', 'noInternal has been', 'finished!',
];
const endIndex = report.indexOf('End');

const tabs = ['主屏幕', '参数定义', '二维建模', '材料属性', '网格剖分', '分析', '结果展示'];

export default function App() {
  return (
    <Page>
      <Global />
      <Defs />
      <TitleBar>
        <QuickBar>
          <Slot $w={23}><AppLogo s={19} /></Slot>
          <Slot $w={28}><NewDoc /></Slot>
          <Slot $w={28}><Folder /></Slot>
          <Slot $w={29}><Save /></Slot>
          <Slot $w={26}><Undo c="#8a97a8" /></Slot>
          <Slot $w={16}><Tri c="#5b5f64" /></Slot>
          <Slot $w={32}><Undo flip c="#dfe1e4" /></Slot>
          <Slot $w={12}><Tri c="#b4b7bb" /></Slot>
          <Slot $w={12}><QuickSep /></Slot>
          <Slot $w={20}><Refresh /></Slot>
          <Slot $w={22}><Customize /></Slot>
        </QuickBar>
        <AppTitle>Simdroid</AppTitle>
        <WinControls>
          <Slot $w={63}><Ic w={15} h={2}><path d="M0 1H15" stroke="#222" strokeWidth="1.2" /></Ic></Slot>
          <Slot $w={63}><Ic w={15} h={15}><path d="M3.500 3.500V.5H14.500V11.500H11.500M.5 3.500H11.500V14.500H.5Z" fill="none" stroke="#222" /></Ic></Slot>
          <Slot $w={63}><Ic w={15} h={15}><path d="M.5 .5 14.500 14.500M14.500 .5 .5 14.500" stroke="#222" strokeWidth="1.1" /></Ic></Slot>
        </WinControls>
      </TitleBar>

      <TabRow>
        <FileTab>文件</FileTab>
        {tabs.map(t => <RibbonTab key={t} $active={t === '网格剖分'}>{t}</RibbonTab>)}
        <Collapse><Ic w={12} h={11}><path d="M1 6 6 1 11 6V10L6 6 1 10Z" fill="#fff" stroke="#555f6a" strokeWidth="1.300" /></Ic></Collapse>
      </TabRow>

      <Ribbon>
        <RibbonGroup>
          <RibbonBtn><RibbonIcon><BoundaryIcon /></RibbonIcon><RibbonLabel>边界名称</RibbonLabel></RibbonBtn>
        </RibbonGroup>
        <RibbonGroup>
          <RibbonBtn $off><RibbonIcon><XtMeshIcon c="#e6e6e6" line="#9d9d9d" text="#8e8e8e" /></RibbonIcon><RibbonLabel>多面体网格设置</RibbonLabel></RibbonBtn>
          <RibbonBtn><RibbonIcon><RefineIcon /></RibbonIcon><RibbonLabel>局部加密</RibbonLabel></RibbonBtn>
          <RibbonBtn><RibbonIcon><AnisoIcon /></RibbonIcon><RibbonLabel>各向异性</RibbonLabel></RibbonBtn>
        </RibbonGroup>
        <RibbonGroup>
          <RibbonBtn><RibbonIcon><XtMeshIcon c="#cfe2f4" line="#2e6da4" text="#24365f" /></RibbonIcon><RibbonLabel>非结构网格设置</RibbonLabel></RibbonBtn>
          <RibbonBtn><RibbonIcon><EdgeCtrlIcon /></RibbonIcon><RibbonLabel>边控制</RibbonLabel></RibbonBtn>
          <RibbonBtn><RibbonIcon><FaceCtrlIcon /></RibbonIcon><RibbonLabel>面控制</RibbonLabel></RibbonBtn>
        </RibbonGroup>
        <RibbonGroup>
          <RibbonBtn><RibbonIcon><GenMeshIcon /></RibbonIcon><RibbonLabel>生成网格</RibbonLabel></RibbonBtn>
        </RibbonGroup>
        <RibbonGroup>
          <RibbonBtn><RibbonIcon><CheckMeshIcon /></RibbonIcon><RibbonLabel>网格检测</RibbonLabel></RibbonBtn>
        </RibbonGroup>
      </Ribbon>

      <Main>
        <LeftPanel>
          <PanelHeader $h={33}>
            <PanelTitle>组合浏览器</PanelTitle>
            <HeaderBtns><SkipBtn /><CloseBtn /></HeaderBtns>
          </PanelHeader>
          <TreeTabs>
            <TreeTab $active>模型</TreeTab>
            <TreeTab>任务</TreeTab>
          </TreeTabs>
          <TreeBox>
            {treeRows.map(r => (
              <TreeRow key={r.text + r.g.length}>
                {r.g.map((k, i) => (k === 'minus' || k === 'plus')
                  ? <Toggle key={i}><ToggleDot>{k === 'minus' ? '−' : '+'}</ToggleDot></Toggle>
                  : <Guide key={i} $kind={k} />)}
                <RowBody $selected={r.sel}><RowIcon>{r.icon}</RowIcon><RowText>{r.text}</RowText></RowBody>
              </TreeRow>
            ))}
          </TreeBox>
          <Gap />
          <PropBox>
            <PropHead>
              <PropHeadCell>属性</PropHeadCell>
              <PropHeadCell $line>值</PropHeadCell>
            </PropHead>
            <PropSection>基本信息</PropSection>
            <PropRow>
              <PropGutter $kind="arrow"><Ic w={7} h={10}><path d="M1 1 5.500 5 1 9" fill="none" stroke="#a4a7ab" strokeWidth="1.500" /></Ic></PropGutter>
              <PropName $white>定位</PropName>
              <PropValue $white>{'[(0.00 0.00 1.00); 0 °; (0 mm  0 mm  0 mm)]'}</PropValue>
            </PropRow>
            <PropRow>
              <PropGutter $kind="tee" />
              <PropName>标签</PropName>
              <PropValue>Face</PropValue>
            </PropRow>
            <PropSection>部件</PropSection>
            <PropRow>
              <PropGutter $kind="elbow" />
              <PropName>基础实体</PropName>
              <PropValue>草图</PropValue>
            </PropRow>
          </PropBox>
          <BottomTabs>
            <BottomTab>视图</BottomTab>
            <BottomTab $active>数据</BottomTab>
          </BottomTabs>
        </LeftPanel>

        <Center>
          <ViewToolbar>
            <Slot $w={36}><Camera /></Slot>
            <Slot $w={40}><Printer /></Slot>
            <ToolSep />
            <Slot $w={36}><NodeTool /></Slot>
            <ToolChev $w={10}><Chev /></ToolChev>
            <Slot $w={38}><Hexagon /></Slot>
            <ToolChev><Chev /></ToolChev>
            <ToolSep />
            <Slot $w={38}><ZoomBox /></Slot>
            <Slot $w={39}><FitAll /></Slot>
            <Slot $w={38}><DiamondFit /></Slot>
            <Slot $w={35}><AxesTool /></Slot>
            <ToolChev><Chev /></ToolChev>
            <ToolSep />
            <Slot $w={40}><Eye /></Slot>
            <Slot $w={38}><Ortho /></Slot>
            <ToolSep />
            <Slot $w={39}><CubeBulb bulb="#9fd0f2" edge="#7b8896" /></Slot>
            <Slot $w={39}><CubeBulb bulb="#e4e5e7" edge="#a0a3a7" /></Slot>
          </ViewToolbar>
          <Viewport><Scene /></Viewport>
          <DocStrip>
            <DocTab><AppLogo s={21} /><span>突扩区域-二维*</span></DocTab>
          </DocStrip>
        </Center>

        <RightPanel>
          <PanelHeader $h={35}>
            <RightTitle>报告浏览器</RightTitle>
            <RightHeaderBtns><SkipBtn /><CloseBtn /></RightHeaderBtns>
          </PanelHeader>
          <ReportBox>
            <ReportText>
              {report.map((l, i) => <ReportLine key={i} $tall={i >= 18 && i < endIndex}>{l}</ReportLine>)}
            </ReportText>
            <ScrollCol>
              <Ic w={9} h={5}><path d="M0 5 4.500 0 9 5Z" fill="#8d9094" /></Ic>
              <ScrollTrack><ScrollThumb /></ScrollTrack>
              <Ic w={9} h={5}><path d="M0 0 4.500 5 9 0Z" fill="#6f7378" /></Ic>
            </ScrollCol>
          </ReportBox>
        </RightPanel>
      </Main>

      <StatusBar>1.3e+02 mm x 87 mm</StatusBar>

      <TaskBar>
        <TaskSlot $w={60}><WinLogo /></TaskSlot>
        <TaskSlot $w={60}><CircleBtn /></TaskSlot>
        <TaskSlot $w={60}><TaskView /></TaskSlot>
        <TaskGap $w={3} />
        <TaskSlot $w={62}><EdgeLogo /></TaskSlot>
        <TaskSlot $w={62}><ExplorerLogo /></TaskSlot>
        <TaskSlot $w={62}><MailLogo /></TaskSlot>
        <TaskGap $w={6} />
        <TaskSlot $w={51} $on><SLogo /></TaskSlot>
        <TaskGap $w={6} />
        <TaskSlot $w={61} $on $tile><Avatar /></TaskSlot>
        <TaskGap $w={6} />
        <TaskSlot $w={51} $on><AppLogo s={30} /></TaskSlot>
        <Tray>
          <TaskSlot $w={39}><HelpBadge /></TaskSlot>
          <TaskSlot $w={30}><Ic w={16} h={9}><path d="M1 8 8 1 15 8" fill="none" stroke="#2b2d30" strokeWidth="1.200" /></Ic></TaskSlot>
          <TaskSlot $w={30}><GreenPlus /></TaskSlot>
          <TaskSlot $w={30}><Battery /></TaskSlot>
          <TaskSlot $w={30}><Wifi /></TaskSlot>
          <TaskSlot $w={26}><Volume /></TaskSlot>
          <TaskSlot $w={34}><QQ /></TaskSlot>
          <TrayText>中</TrayText>
          <TaskGap $w={12} />
          <TaskSlot $w={22}><ImeBox>拼</ImeBox></TaskSlot>
          <TaskGap $w={8} />
          <Clock>14:26<br />2022/12/3</Clock>
          <TaskSlot $w={42}><Bubble /></TaskSlot>
          <TaskGap $w={12} />
        </Tray>
      </TaskBar>
    </Page>
  );
}
